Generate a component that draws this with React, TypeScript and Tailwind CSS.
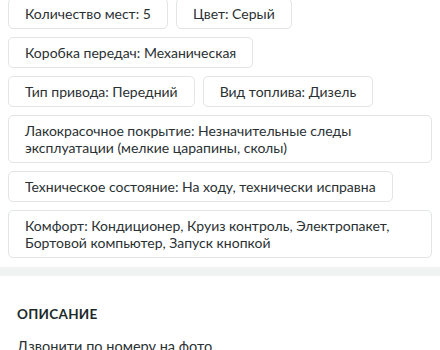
const chips = [
  "Количество мест: 5",
  "Цвет: Серый",
  "Коробка передач: Механическая",
  "Тип привода: Передний",
  "Вид топлива: Дизель",
  "Лакокрасочное покрытие: Незначительные следы эксплуатации (мелкие царапины, сколы)",
  "Техническое состояние: На ходу, технически исправна",
  "Комфорт: Кондиционер, Круиз контроль, Электропакет, Бортовой компьютер, Запуск кнопкой",
];

export default function App() {
  return (
    <div className="w-[440px] h-[350px] overflow-hidden bg-white font-['Lato','Liberation_Sans',sans-serif]">
      <div className="-mt-[2px] px-2 pb-[9px] flex flex-wrap gap-x-2 gap-y-2">
        {chips.map((c) => (
          <div
            key={c}
            className="border border-[#e1e5e5] rounded-[5px] px-4 py-[6px] text-[14px] leading-[17px] text-[#2a3133]"
          >
            {c}
          </div>
        ))}
      </div>
      <div className="h-[9px] bg-[#f1f3f3]" />
      <div className="px-[17px] pt-[28px]">
        <h2 className="text-[13.5px] font-bold tracking-[0.3px] text-[#1c2a2a] leading-[20px]">
          ОПИСАНИЕ
        </h2>
        <p className="mt-[13px] text-[14.5px] leading-[20px] text-[#2a3133]">
          Дзвонити по номеру на фото
        </p>
      </div>
    </div>
  );
}
